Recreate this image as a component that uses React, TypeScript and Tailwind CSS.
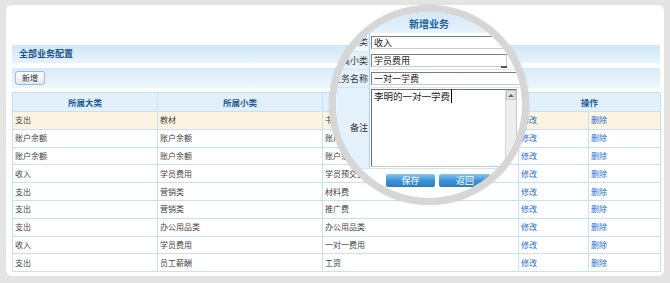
import React from 'react';

const rows: [string, string, string][] = [
  ['支出', '教材', '书本费'],
  ['账户余额', '账户余额', '账户余额'],
  ['账户余额', '账户余额', '账户余额'],
  ['收入', '学员费用', '学员预交费'],
  ['支出', '营销类', '材料费'],
  ['支出', '营销类', '推广费'],
  ['支出', '办公用品类', '办公用品类'],
  ['收入', '学员费用', '一对一费用'],
  ['支出', '员工薪酬', '工资'],
];

const cols = 'grid grid-cols-[145px_165px_196px_70px_72px]';
const cell = 'border-r border-b border-[#c3e2f6] px-[2px] flex items-center overflow-hidden whitespace-nowrap';

function Magnifier() {
  const input =
    'h-[13px] border border-[#7d7d7d] border-r-[#c9c9c9] border-b-[#c9c9c9] bg-white pl-[2px] flex items-center text-[9px] text-[#222] leading-none';
  return (
    <div className="absolute left-[329px] top-[5px] w-[200px] h-[200px] rounded-full border-[7px] border-[#d6d6d6] overflow-hidden bg-white shadow-[0_0_2px_rgba(0,0,0,0.15)]">
      <div className="absolute left-[-38px] top-[-12px] w-[262px]">
        <div className="h-[33px] pt-[18px] bg-gradient-to-b from-[#c6e2f6] to-[#e6f3fc] text-center text-[10px] leading-[12px] font-bold text-[#1d5fa4]">
          新增业务
        </div>
        <div className="flex">
          <div className="w-[72px] bg-[#e4f1fb] border-r border-[#a9d2ee] text-[9px] text-[#333] text-right pr-[1px]">
            <div className="h-[18px] flex items-center justify-end bg-[#f3f9fd]">所属大类</div>
            <div className="h-[18px] flex items-center justify-end border-t border-[#d0e7f7]">所属小类</div>
            <div className="h-[18px] flex items-center justify-end border-t border-[#d0e7f7]">业务名称</div>
            <div className="h-[81px] flex items-center justify-end border-t border-[#d0e7f7]">备注</div>
          </div>
          <div className="flex-1 pl-[1px]">
            <div className="h-[18px] flex items-center">
              <div className={`${input} w-[170px]`}>收入</div>
            </div>
            <div className="h-[18px] flex items-center">
              <div className={`${input} w-[136px] relative border-r-[#7d7d7d]`}>
                学员费用
                <span className="absolute right-[-1px] bottom-[-2px] w-[6px] h-[2px] bg-[#555]" />
              </div>
            </div>
            <div className="h-[18px] flex items-center border-t border-[#d0e7f7]">
              <div className={`${input} w-[170px]`}>一对一学费</div>
            </div>
            <div className="h-[81px] pt-[1px] border-t border-[#d0e7f7]">
              <div className="w-[146px] h-[78px] border border-[#6e6e6e] border-r-[#c9c9c9] border-b-[#c9c9c9] bg-white flex">
                <div className="flex-1 pl-[2px] pt-[1px] text-[9.5px] leading-[11px] text-[#222]">
                  <span className="border-r border-black pr-px">李明的一对一学费</span>
                </div>
                <div className="w-[11px] bg-[#eeeeee] border-l border-[#d5d5d5] flex flex-col">
                  <div className="h-[10px] bg-[#e2e2e2] border border-[#c4c4c4] flex items-center justify-center">
                    <span className="w-0 h-0 border-l-[3px] border-r-[3px] border-b-[3px] border-l-transparent border-r-transparent border-b-[#666]" />
                  </div>
                </div>
              </div>
            </div>
          </div>
        </div>
        <div className="h-[24px] border-t border-[#cbe4f6] flex items-center gap-[4px] pl-[88px]">
          <button className="w-[49px] h-[13px] rounded-[2px] bg-gradient-to-b from-[#86c6f0] via-[#3d93d6] to-[#2d7cc1] text-white text-[9px] leading-none">
            保存
          </button>
          <button className="w-[52px] h-[13px] rounded-[2px] bg-gradient-to-b from-[#86c6f0] via-[#3d93d6] to-[#2d7cc1] text-white text-[9px] leading-none">
            返回
          </button>
        </div>
      </div>
    </div>
  );
}

export default function App() {
  return (
    <div
      className="relative w-[670px] h-[283px] overflow-hidden bg-[#e4e4e4] pt-[5px] pl-[6px] pr-[6px] pb-[7px]"
      style={{ fontFamily: '"Noto Sans CJK SC", "Liberation Sans", sans-serif' }}
    >
      <div className="h-full bg-white rounded-[6px] pt-[40px] pl-[6px] pr-[4px]">
        <div className="h-[18px] bg-gradient-to-b from-[#d0e7f7] to-[#e7f3fc] flex items-center pl-[7px] text-[9px] font-bold text-[#1c4f88]">
          全部业务配置
        </div>
        <div className="mt-[5px] h-[20px] bg-gradient-to-b from-[#d7ebf9] to-[#edf6fd] flex items-center pl-[3px]">
          <button className="h-[14px] px-[6px] rounded-[3px] border border-[#9cbad3] bg-gradient-to-b from-white to-[#e3e9ee] text-[8px] leading-none text-[#333]">
            新增
          </button>
        </div>
        <div className="mt-[4px] border-l border-t border-[#c3e2f6] text-[8px] text-[#444]">
          <div className={`${cols} h-[19px] bg-[#e2f0fb] font-bold text-[8.5px] text-[#1d5a98]`}>
            <div className={`${cell} justify-center`}>所属大类</div>
            <div className={`${cell} justify-center`}>所属小类</div>
            <div className={`${cell} justify-center`}>业务名称</div>
            <div className={`${cell} justify-center col-span-2`}>操作</div>
          </div>
          {rows.map((r, i) => (
            <div key={i} className={`${cols} h-[17.8px] ${i === 0 ? 'bg-[#fcf3e1]' : 'bg-white'}`}>
              <div className={cell}>{r[0]}</div>
              <div className={cell}>{r[1]}</div>
              <div className={cell}>{r[2]}</div>
              <div className={`${cell} text-[#2a6fd4]`}>修改</div>
              <div className={`${cell} text-[#2a6fd4]`}>删除</div>
            </div>
          ))}
        </div>
      </div>
      <Magnifier />
    </div>
  );
}
